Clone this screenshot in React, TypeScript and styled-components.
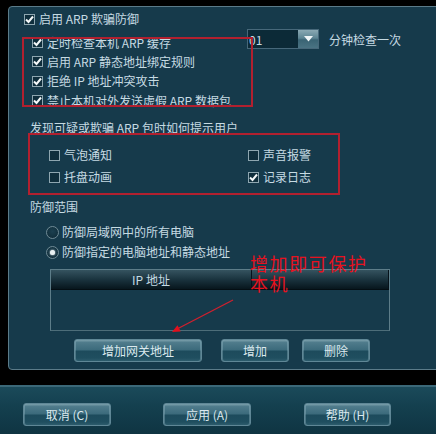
import React from 'react';
import styled, { createGlobalStyle } from 'styled-components';

const FONT = `"Noto Sans CJK SC", "Liberation Sans", sans-serif`;

const Global = createGlobalStyle`
  html, body { margin: 0; padding: 0; background: #000; }
  body { font-family: ${FONT}; }
`;

const Screen = styled.div`
  width: 436px;
  height: 434px;
  overflow: hidden;
  background: #000;
  display: flex;
  flex-direction: column;
  font-family: ${FONT};
  font-size: 12px;
  color: #c6dbe3;
`;

const Panel = styled.div`
  position: relative;
  box-sizing: border-box;
  flex-shrink: 0;
  margin: 6px 0 0 8px;
  width: 440px;
  height: 364px;
  border: 1px solid #5b7b89;
  border-radius: 4px;
  background: #163a4b;
  display: flex;
  flex-direction: column;
`;

const Row = styled.div<{ $indent?: number; $h?: number; $mt?: number; $gap?: number }>`
  display: flex;
  align-items: center;
  gap: ${(p) => p.$gap ?? 4}px;
  height: ${(p) => p.$h ?? 20}px;
  padding-left: ${(p) => p.$indent ?? 0}px;
  margin-top: ${(p) => p.$mt ?? 0}px;
  white-space: nowrap;
  line-height: 1;
  flex-shrink: 0;
`;

const Box = styled.span`
  width: 11px;
  height: 11px;
  box-sizing: border-box;
  border: 1px solid #8ea6b0;
  background: #0f2e3c;
  display: inline-flex;
  align-items: center;
  justify-content: center;
  flex-shrink: 0;
`;

const Check = ({ on }: { on?: boolean }) => (
  <Box>
    {on && (
      <svg width="9" height="9" viewBox="0 0 9 9">
        <path d="M1 4.5 L3.5 7 L8 1.5" fill="none" stroke="#f4f8f9" strokeWidth="2" />
      </svg>
    )}
  </Box>
);

const RadioDot = styled.span<{ $on?: boolean }>`
  width: 13px;
  height: 13px;
  box-sizing: border-box;
  border-radius: 50%;
  border: 1px solid #6f8a95;
  background: radial-gradient(circle at 50% 40%, #1c4050, #0e2a36);
  display: inline-flex;
  align-items: center;
  justify-content: center;
  flex-shrink: 0;
  &::after {
    content: '';
    display: ${(p) => (p.$on ? 'block' : 'none')};
    width: 5px;
    height: 5px;
    border-radius: 50%;
    background: #e8f0f2;
    box-shadow: 0 0 2px #ffffff;
  }
`;

const SubArea = styled.div`
  display: flex;
  margin-top: 4px;
  flex-shrink: 0;
`;

const CheckList = styled.div`
  width: 238px;
  flex-shrink: 0;
  display: flex;
  flex-direction: column;
`;

const Interval = styled.div`
  display: flex;
  align-items: center;
  gap: 10px;
  height: 20px;
  margin-top: -4px;
  white-space: nowrap;
`;

const Combo = styled.div`
  display: flex;
  width: 72px;
  height: 20px;
  box-sizing: border-box;
  border: 1px solid #47687a;
`;

const ComboText = styled.div`
  flex: 1;
  background: #0c2a37;
  display: flex;
  align-items: center;
  overflow: hidden;
  padding-left: 1px;
  color: #c6dbe3;
`;

const ComboButton = styled.div`
  width: 20px;
  background: linear-gradient(#8aa9b3 0%, #5d8593 45%, #3a6474 55%, #4a7383 100%);
  display: flex;
  align-items: center;
  justify-content: center;
`;

const OptionGrid = styled.div`
  display: grid;
  grid-template-columns: 199px auto;
  grid-auto-rows: 22px;
  padding-left: 40px;
  margin-top: 6px;
  flex-shrink: 0;
`;

const Table = styled.div`
  margin: 7px 0 0 41px;
  width: 340px;
  height: 62px;
  box-sizing: border-box;
  border: 1px solid #5d7d89;
  border-bottom-color: #4d6d79;
  flex-shrink: 0;
  display: flex;
  flex-direction: column;
`;

const HeaderRow = styled.div`
  display: flex;
  height: 19px;
  background: linear-gradient(#35535f 0%, #1a333e 50%, #07161d 100%);
  border-bottom: 1px solid #040e13;
`;

const HeaderCell = styled.div<{ $w?: number }>`
  ${(p) => (p.$w ? `width: ${p.$w}px;` : 'flex: 1;')}
  display: flex;
  align-items: center;
  justify-content: center;
  border-right: 1px solid #05121a;
  color: #c6dbe3;
`;

const ButtonRow = styled.div<{ $left: number; $mt?: number }>`
  display: flex;
  align-items: center;
  margin-top: ${(p) => p.$mt ?? 0}px;
  padding-left: ${(p) => p.$left}px;
  flex-shrink: 0;
`;

const Btn = styled.button<{ $w: number; $ml?: number }>`
  width: ${(p) => p.$w}px;
  height: 23px;
  margin-left: ${(p) => p.$ml ?? 0}px;
  box-sizing: border-box;
  padding: 0;
  border: 1px solid #5f8796;
  border-radius: 3px;
  background: linear-gradient(#7a9fab 0%, #4f7b8b 12%, #3b6a7b 48%, #1d4b5c 52%, #1f4e5f 85%, #2d5c6c 100%);
  box-shadow: inset 1px 0 0 rgba(160, 195, 205, 0.35), inset -1px 0 0 rgba(160, 195, 205, 0.35);
  color: #dbe9ee;
  font: 12px ${FONT};
  line-height: 1;
  white-space: nowrap;
`;

const BottomBar = styled.div`
  margin-top: 15px;
  height: 49px;
  flex-shrink: 0;
  box-sizing: border-box;
  border-top: 2px solid #3b6878;
  background: linear-gradient(#1b4a5a 0%, #14404f 40%, #0f3442 100%);
  display: flex;
  align-items: flex-start;
  padding: 16px 0 0 23px;
`;

const RedBox = styled.div<{ $l: number; $t: number; $w: number; $h: number }>`
  position: absolute;
  left: ${(p) => p.$l}px;
  top: ${(p) => p.$t}px;
  width: ${(p) => p.$w}px;
  height: ${(p) => p.$h}px;
  box-sizing: border-box;
  border: 2px solid #b2202f;
  pointer-events: none;
`;

const Note = styled.div`
  position: absolute;
  left: 241px;
  top: 246px;
  color: #e6121f;
  font-size: 18px;
  line-height: 20px;
  letter-spacing: 1.6px;
  white-space: nowrap;
`;

const Arrow = styled.svg`
  position: absolute;
  left: 150px;
  top: 280px;
`;

export default function App() {
  return (
    <Screen>
      <Global />
      <Panel>
        <Row $indent={15} $mt={2}>
          <Check on />
          启用 ARP 欺骗防御
        </Row>
        <SubArea>
          <CheckList>
            <Row $indent={23} $h={19.33}>
              <Check on />
              定时检查本机 ARP 缓存
            </Row>
            <Row $indent={23} $h={19.33}>
              <Check on />
              启用 ARP 静态地址绑定规则
            </Row>
            <Row $indent={23} $h={19.33}>
              <Check on />
              拒绝 IP 地址冲突攻击
            </Row>
            <Row $indent={23} $h={19.33}>
              <Check on />
              禁止本机对外发送虚假 ARP 数据包
            </Row>
          </CheckList>
          <Interval>
            <Combo>
              <ComboText>01</ComboText>
              <ComboButton>
                <svg width="9" height="6" viewBox="0 0 9 6">
                  <path d="M0 0 H9 L4.5 5.5 Z" fill="#eef4f6" />
                </svg>
              </ComboButton>
            </Combo>
            分钟检查一次
          </Interval>
        </SubArea>
        <Row $indent={21} $mt={8}>
          发现可疑或欺骗 ARP 包时如何提示用户
        </Row>
        <OptionGrid>
          <Row $h={22}>
            <Check />
            气泡通知
          </Row>
          <Row $h={22}>
            <Check />
            声音报警
          </Row>
          <Row $h={22}>
            <Check />
            托盘动画
          </Row>
          <Row $h={22}>
            <Check on />
            记录日志
          </Row>
        </OptionGrid>
        <Row $indent={21} $mt={9}>
          防御范围
        </Row>
        <Row $indent={37} $mt={5} $gap={3}>
          <RadioDot />
          防御局域网中的所有电脑
        </Row>
        <Row $indent={37} $gap={3}>
          <RadioDot $on />
          防御指定的电脑地址和静态地址
        </Row>
        <Table>
          <HeaderRow>
            <HeaderCell $w={200}>IP 地址</HeaderCell>
            <HeaderCell />
          </HeaderRow>
        </Table>
        <ButtonRow $left={65} $mt={8}>
          <Btn $w={128}>增加网关地址</Btn>
          <Btn $w={68} $ml={19}>增加</Btn>
          <Btn $w={68} $ml={13}>删除</Btn>
        </ButtonRow>

        <RedBox $l={13} $t={30} $w={231} $h={70} />
        <RedBox $l={19} $t={126} $w={312} $h={62} />
        <Note>
          增加即可保护
          <br />
          本机
        </Note>
        <Arrow width="100" height="60" viewBox="0 0 100 60">
          <line x1="74" y1="13" x2="19" y2="41.5" stroke="#d0202e" strokeWidth="1.3" />
          <polygon points="13,45 21.7,44.4 18.5,38.2" fill="#e0101e" />
        </Arrow>
      </Panel>
      <BottomBar>
        <Btn $w={88}>取消 (C)</Btn>
        <Btn $w={88} $ml={52}>应用 (A)</Btn>
        <Btn $w={87} $ml={53}>帮助 (H)</Btn>
      </BottomBar>
    </Screen>
  );
}
